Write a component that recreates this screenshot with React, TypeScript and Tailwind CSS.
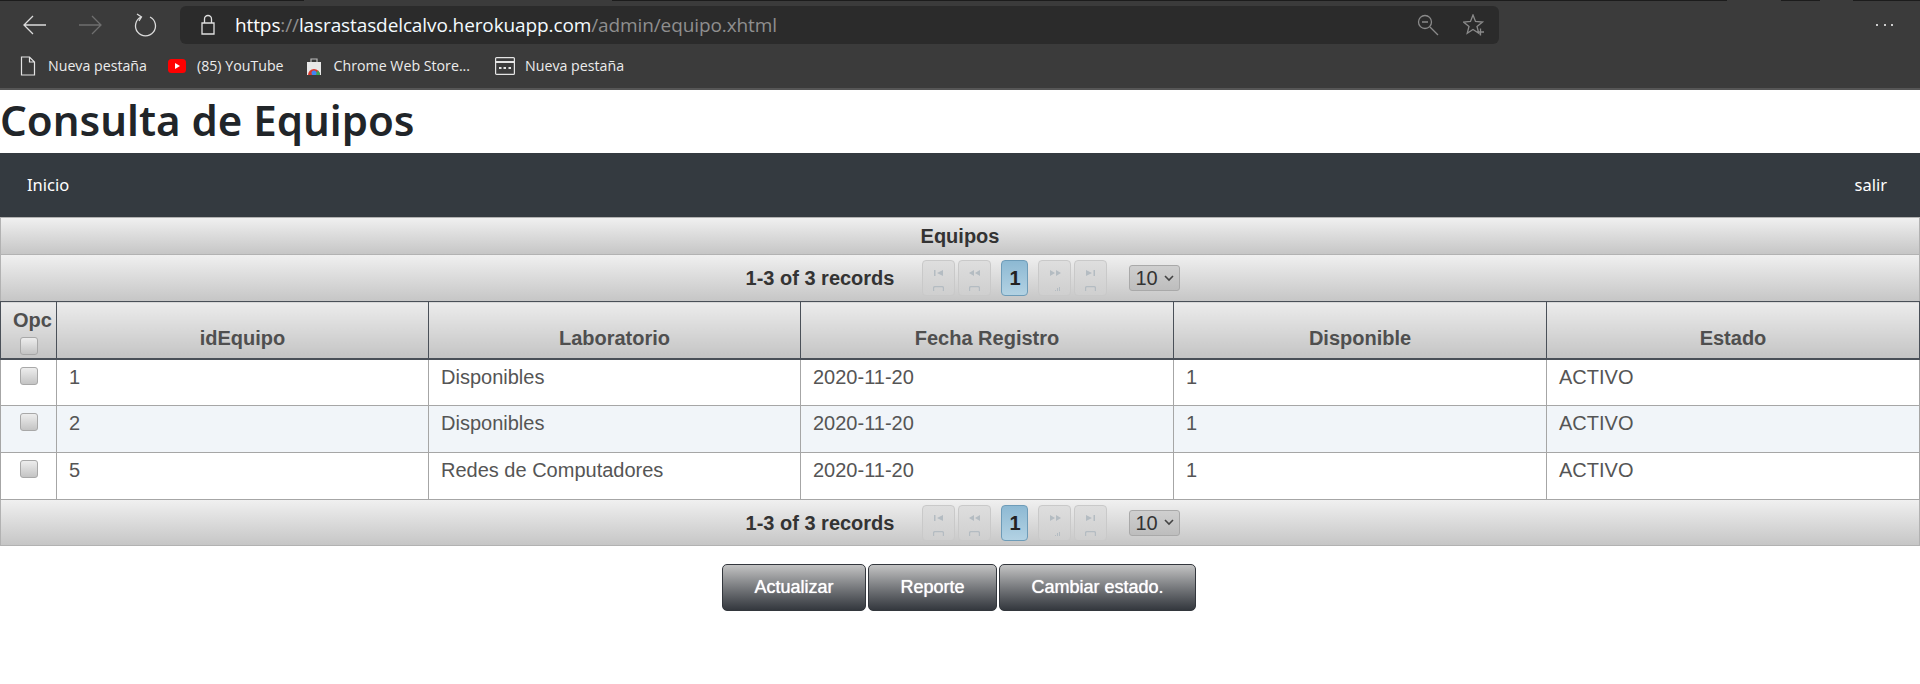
import React from 'react';

const rows = [
  { id: '1', lab: 'Disponibles', fecha: '2020-11-20', disp: '1', estado: 'ACTIVO', alt: false },
  { id: '2', lab: 'Disponibles', fecha: '2020-11-20', disp: '1', estado: 'ACTIVO', alt: true },
  { id: '5', lab: 'Redes de Computadores', fecha: '2020-11-20', disp: '1', estado: 'ACTIVO', alt: false },
];

const Check = () => (
  <div className="w-[18px] h-[18px] rounded-[3px] border border-[#a8a8a8] bg-gradient-to-b from-[#ededed] to-[#c4c4c4]" />
);

// tiny disabled jQuery UI style arrows plus the faded mark under them
const PageBtn = ({ kind }: { kind: 'first' | 'prev' | 'next' | 'last' }) => (
  <div className="w-[33px] h-[36px] rounded-[4px] border border-[#c9c9c9] bg-gradient-to-b from-[#dedede] to-[#cfcfcf]">
    <svg width="31" height="34" viewBox="0 0 31 34" fill="#b4bcc2" stroke="none">
      {kind === 'first' && <path d="M11 9h1.5v6H11zM20 9v6l-6-3z" />}
      {kind === 'prev' && <path d="M15 9v6l-5-3zM21 9v6l-5-3z" />}
      {kind === 'next' && <path d="M11 9v6l5-3zM17 9v6l5-3z" />}
      {kind === 'last' && <path d="M11 9v6l6-3zM18.500 9H20v6h-1.500z" />}
      {kind === 'next' ? (
        <path d="M16 29h1v1h-1zM18 27h1v3h-1zM20 26h1v4h-1z" />
      ) : (
        <path d="M10 30v-3.500q0-1.500 1.500-1.500h8q1.500 0 1.500 1.500V30h-1.200v-3q0-.8-.8-.8h-7q-.8 0-.8.8v3z" />
      )}
    </svg>
  </div>
);

const Paginator = ({ extra }: { extra: string }) => (
  <div className={`flex items-center justify-center pl-[6px] bg-gradient-to-b from-[#f0f0f0] to-[#c6c6c6] ${extra}`}>
    <span className="text-[20px] font-bold text-[#333] mr-[28px]">1-3 of 3 records</span>
    <div className="flex gap-[3px] mr-[10px]">
      <PageBtn kind="first" />
      <PageBtn kind="prev" />
    </div>
    <div className="w-[27px] h-[36px] mr-[10px] rounded-[4px] border border-[#6e9cb8] bg-gradient-to-b from-[#8db9d3] to-[#b3d2e3] flex items-center justify-center text-[20px] font-bold text-[#222]">
      1
    </div>
    <div className="flex gap-[3px] mr-[22px]">
      <PageBtn kind="next" />
      <PageBtn kind="last" />
    </div>
    <div className="w-[51px] h-[26px] rounded-[3px] border border-[#a9a9a9] bg-gradient-to-b from-[#cfcfcf] to-[#bdbdbd] flex items-center pl-[5px] gap-[6px] text-[20px] text-[#333] font-normal">
      10
      <svg width="10" height="7" viewBox="0 0 10 7" fill="none" stroke="#444" strokeWidth="1.600">
        <path d="M1 1l4 4 4-4" />
      </svg>
    </div>
  </div>
);

const Th = ({ label }: { label: string }) => (
  <th className="border-l border-[#4a5058] px-[12px] pb-[5px] align-bottom text-center text-[20px] font-bold text-[#4f4f4f] bg-gradient-to-b from-[#ececec] to-[#c4c4c4]">
    {label}
  </th>
);

const Bookmark = ({ icon, label, extra = '' }: { icon: React.ReactNode; label: string; extra?: string }) => (
  <div className={`flex items-center gap-[10px] text-[14.200px] text-[#ececec] ${extra}`}>
    <span className="w-[20px] h-[20px] flex items-center justify-center">{icon}</span>
    {label}
  </div>
);

// the black sliver left at the top of the capture, broken where tabs were cut off
const TopEdge = () => (
  <div className="h-[1px] flex">
    <div className="w-[304px] bg-[#1c1c1c]" />
    <div className="w-[308px]" />
    <div className="w-[1115px] bg-[#1c1c1c]" />
    <div className="w-[54px]" />
    <div className="w-[39px] bg-[#1c1c1c]" />
    <div className="w-[33px]" />
    <div className="flex-1 bg-[#1c1c1c]" />
  </div>
);

const Browser = () => (
  <div className="h-[90px] bg-[#3b3b3b] border-b-2 border-[#565656] flex flex-col">
    <TopEdge />
    <div className="h-[48px] flex items-center pl-[22px] pr-[27px]">
      <svg width="26" height="24" viewBox="0 0 26 24" fill="none" stroke="#dcdcdc" strokeWidth="1.300">
        <path d="M2 12h22M11 3l-9 9 9 9" />
      </svg>
      <svg className="ml-[29px]" width="26" height="24" viewBox="0 0 26 24" fill="none" stroke="#6f6f6f" strokeWidth="1.300">
        <path d="M2 12h22M15 3l9 9-9 9" />
      </svg>
      <svg className="ml-[31px]" width="24" height="26" viewBox="0 0 24 26" fill="none" stroke="#dcdcdc" strokeWidth="1.300">
        <path d="M7 5a10 10 0 1 0 9 0M3 2l4.500 3L5 9" />
      </svg>
      <div className="ml-[22px] w-[1319px] h-[38px] rounded-[6px] bg-[#2b2b2b] flex items-center pl-[18px] pr-[14px]">
        <svg width="20" height="24" viewBox="0 0 20 24" fill="none" stroke="#e0e0e0" strokeWidth="1.300">
          <path d="M4 10h12v11H4zM6.500 10V6a3.500 3.500 0 0 1 7 0v4" />
        </svg>
        <span className="ml-[17px] text-[19px] font-['Open_Sans',sans-serif] tracking-[-0.11px] text-[#8f8f8f]">
          <span className="text-white">https</span>://<span className="text-[#f4fbff]">lasrastasdelcalvo.herokuapp.com</span>/admin/equipo.xhtml
        </span>
        <div className="ml-auto flex items-center gap-[24px]">
          <svg width="22" height="22" viewBox="0 0 22 22" fill="none" stroke="#8a8a8a" strokeWidth="1.300">
            <circle cx="8" cy="8" r="6.500" />
            <path d="M5 8h6M13 13l8 8" />
          </svg>
          <svg width="22" height="22" viewBox="0 0 22 22" fill="none" stroke="#8a8a8a" strokeWidth="1.300">
            <path d="M10 1l2.500 6.500 7 .5-5.500 4.500 1.800 6.800-5.800-3.800-5.800 3.800L6 12.500.5 8l7-.5zM14 18h7M17.500 14.500v7" />
          </svg>
        </div>
      </div>
      <div className="ml-auto flex gap-[5.500px]">
        <span className="w-[2px] h-[2px] rounded-full bg-white" />
        <span className="w-[2px] h-[2px] rounded-full bg-white" />
        <span className="w-[2px] h-[2px] rounded-full bg-white" />
      </div>
    </div>
    <div className="flex-1 flex items-center pl-[18px] pb-[5px] gap-[20px] font-['Open_Sans',sans-serif]">
      <Bookmark
        icon={
          <svg width="16" height="20" viewBox="0 0 16 20" fill="none" stroke="#e4e4e4" strokeWidth="1.200">
            <path d="M1.500 1h8l5 5v13h-13zM9.500 1v5h5" />
          </svg>
        }
        label="Nueva pestaña"
      />
      <Bookmark
        icon={
          <svg width="18" height="14" viewBox="0 0 18 14">
            <rect width="18" height="14" rx="3.500" fill="#f00" />
            <path d="M7 4l5 3-5 3z" fill="#fff" />
          </svg>
        }
        label="(85) YouTube"
      />
      <Bookmark
        icon={
          <svg width="16" height="18" viewBox="0 0 16 18">
            <path d="M1 5h14v13H1z" fill="#e8e8e8" />
            <path d="M5 5V2h6v3" fill="none" stroke="#bbb" strokeWidth="1.200" />
            <path d="M2 18a6 6 0 0 1 12 0z" fill="#d9382c" />
            <path d="M8 18h6a6 6 0 0 0-2-4.500z" fill="#3aa757" />
            <circle cx="8" cy="16" r="2.500" fill="#4285f4" />
          </svg>
        }
        label="Chrome Web Store..."
      />
      <Bookmark
        extra="ml-[5px]"
        icon={
          <svg width="20" height="18" viewBox="0 0 20 18" fill="none" stroke="#e4e4e4" strokeWidth="1.200">
            <rect x=".6" y=".6" width="18.800" height="16.800" rx="1" />
            <path d="M1 5h18M4 11h2.500M8.500 11H11M13.500 11H16" strokeWidth="2" />
          </svg>
        }
        label="Nueva pestaña"
      />
    </div>
  </div>
);

const ActionBtn = ({ label, w }: { label: string; w: string }) => (
  <button className={`${w} h-[47px] rounded-[5px] border border-[#33373d] bg-gradient-to-b from-[#c4c4c4] to-[#34383e] text-white text-[18px] font-normal [text-shadow:0_0_1px_#fff]`}>
    {label}
  </button>
);

export default function App() {
  return (
    <div className="w-[1920px] h-[684px] overflow-hidden bg-white font-['Liberation_Sans',sans-serif]">
      <Browser />
      <h1 className="h-[63px] leading-[60px] text-[42px] font-semibold text-[#212529] font-['Noto_Sans',sans-serif]">
        Consulta de Equipos
      </h1>
      <nav className="h-[64px] bg-[#343a40] flex items-center justify-between pl-[27px] pr-[33px] text-[16.500px] text-white font-['Noto_Sans',sans-serif]">
        <span>Inicio</span>
        <span>salir</span>
      </nav>
      <div className="h-[38px] flex items-center justify-center border border-[#b2b2b2] bg-gradient-to-b from-[#f0f0f0] to-[#c6c6c6] text-[20px] font-bold text-[#333]">
        Equipos
      </div>
      <Paginator extra="h-[46px] border-x border-[#b2b2b2]" />
      <table className="w-full table-fixed border-collapse">
        <colgroup>
          <col className="w-[56px]" />
          <col className="w-[372px]" />
          <col className="w-[372px]" />
          <col className="w-[373px]" />
          <col className="w-[373px]" />
          <col />
        </colgroup>
        <thead>
          <tr className="h-[57px] border border-b-2 border-[#4a5058]">
            <th className="align-top pt-[8px] text-center text-[20px] leading-[21px] font-bold text-[#4f4f4f] bg-gradient-to-b from-[#ececec] to-[#c4c4c4]">
              <div className="pl-[8px]">Opc</div>
              <div className="flex justify-center mt-[6px]">
                <Check />
              </div>
            </th>
            <Th label="idEquipo" />
            <Th label="Laboratorio" />
            <Th label="Fecha Registro" />
            <Th label="Disponible" />
            <Th label="Estado" />
          </tr>
        </thead>
        <tbody>
          {rows.map((r) => (
            <tr key={r.id} className={`h-[47px] border border-[#a6a6a6] text-[20px] text-[#555] ${r.alt ? 'bg-[#f1f5f9]' : 'bg-white'}`}>
              <td className="align-top pt-[7px]">
                <div className="flex justify-center">
                  <Check />
                </div>
              </td>
              {[r.id, r.lab, r.fecha, r.disp, r.estado].map((v, i) => (
                <td key={i} className="align-top pt-[2px] px-[12px] border-l border-[#a6a6a6]">
                  {v}
                </td>
              ))}
            </tr>
          ))}
        </tbody>
      </table>
      <Paginator extra="h-[46px] border-x border-b border-[#b2b2b2]" />
      <div className="flex justify-center gap-[2px] mt-[18px] pr-[2px]">
        <ActionBtn label="Actualizar" w="w-[144px]" />
        <ActionBtn label="Reporte" w="w-[129px]" />
        <ActionBtn label="Cambiar estado." w="w-[197px]" />
      </div>
    </div>
  );
}
